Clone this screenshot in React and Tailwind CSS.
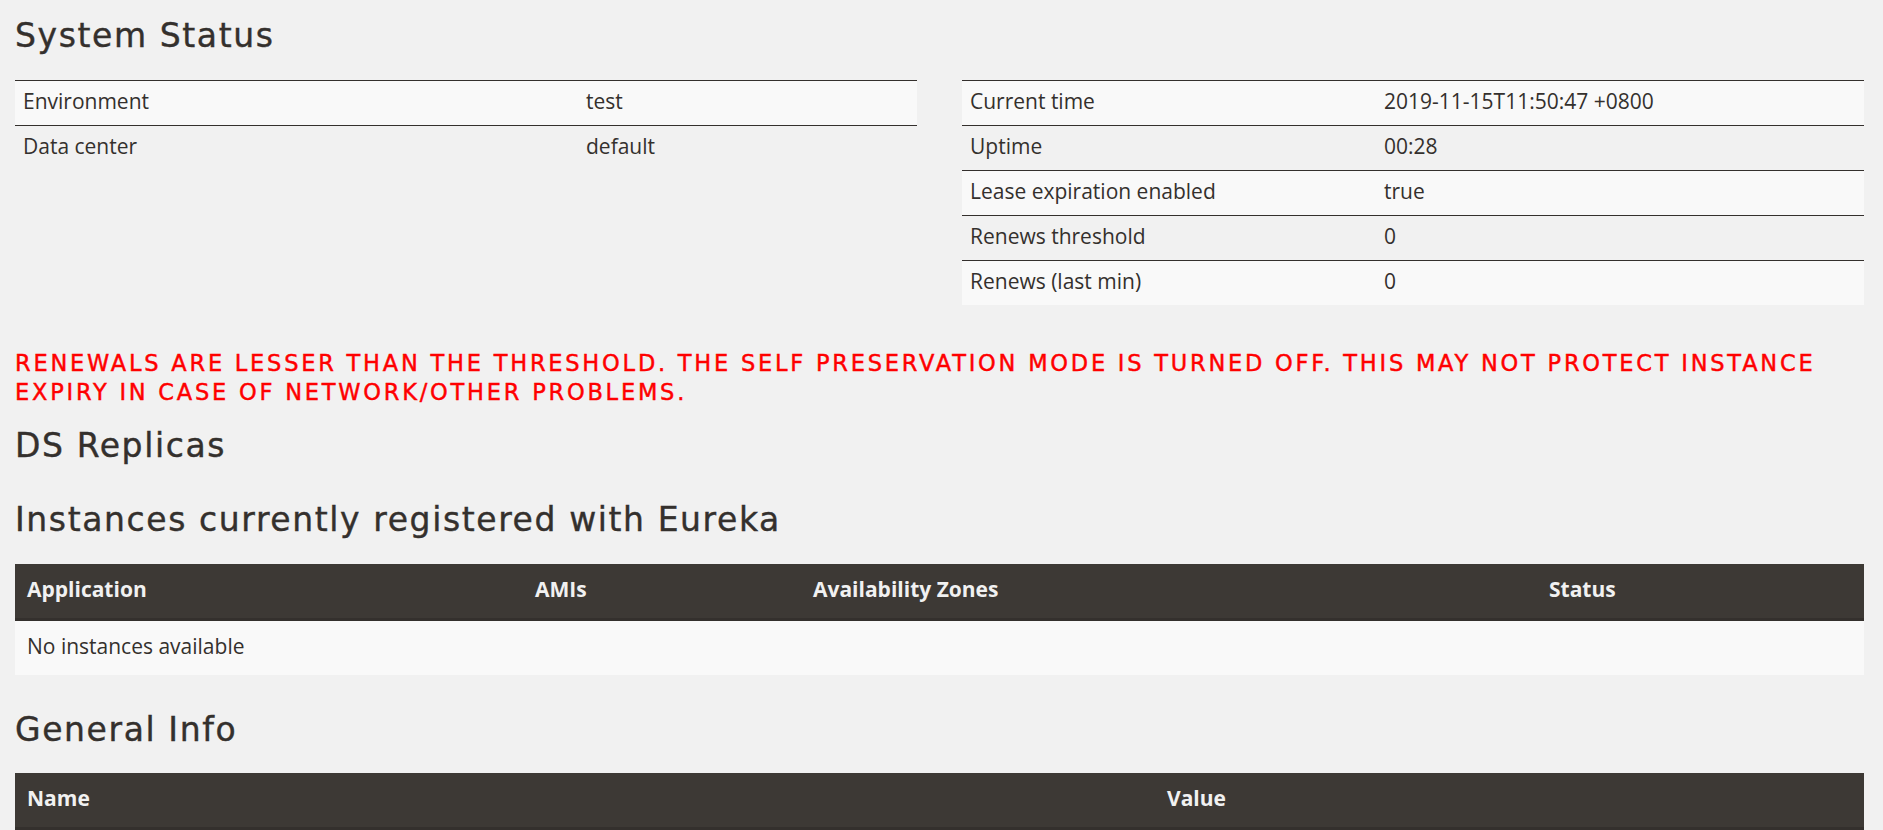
const statusLeft = [
  ["Environment", "test"],
  ["Data center", "default"],
];

const statusRight = [
  ["Current time", "2019-11-15T11:50:47 +0800"],
  ["Uptime", "00:28"],
  ["Lease expiration enabled", "true"],
  ["Renews threshold", "0"],
  ["Renews (last min)", "0"],
];

function Heading({ children, className }) {
  return (
    <h2
      className={`font-['DejaVu_Sans',sans-serif] text-[33px] leading-[40px] tracking-[1.6px] text-[#34302d] [-webkit-text-stroke:0.4px] ${className}`}
    >
      {children}
    </h2>
  );
}

function StatusTable({ rows, labelWidth }) {
  return (
    <table className="w-full table-fixed border-separate border-spacing-0">
      <colgroup>
        <col className={labelWidth} />
        <col />
      </colgroup>
      <tbody>
        {rows.map(([label, value], i) => (
          <tr key={label} className={i % 2 === 0 ? "bg-[#f9f9f9]" : ""}>
            <td className="border-t border-[#34302d] pl-2 pt-[5px] pb-[9px] leading-[30px]">{label}</td>
            <td className="border-t border-[#34302d] pl-2 pt-[5px] pb-[9px] leading-[30px]">{value}</td>
          </tr>
        ))}
      </tbody>
    </table>
  );
}

const th =
  "border-b-[3px] border-[#34302d] bg-[#3d3935] pl-3 pt-[10px] pb-[14px] text-left font-bold leading-[30px] text-[#f1f1f1]";
const td = "bg-[#f9f9f9] pl-3 pt-[10px] pb-[14px] leading-[30px]";

export default function App() {
  return (
    <div className="h-screen overflow-hidden bg-[#f1f1f1] pl-[15px] pr-[19px] font-['Open_Sans',sans-serif] text-[21px] text-[#34302d]">
      <Heading className="pt-[16px]">System Status</Heading>

      <div className="mt-[24px] grid grid-cols-2 items-start gap-x-[45px]">
        <StatusTable rows={statusLeft} labelWidth="w-[563px]" />
        <StatusTable rows={statusRight} labelWidth="w-[414px]" />
      </div>

      <p className="mt-[44px] font-['DejaVu_Sans',sans-serif] text-[22.5px] leading-[29px] tracking-[2.78px] text-[#ff0000] [-webkit-text-stroke:0.45px]">
        RENEWALS ARE LESSER THAN THE THRESHOLD. THE SELF PRESERVATION MODE IS TURNED OFF. THIS MAY NOT PROTECT
        INSTANCE EXPIRY IN CASE OF NETWORK/OTHER PROBLEMS.
      </p>

      <Heading className="mt-[19px]">DS Replicas</Heading>

      <Heading className="mt-[34px]">Instances currently registered with Eureka</Heading>
      <table className="mt-[24px] w-full table-fixed border-separate border-spacing-0">
        <thead>
          <tr>
            <th className={`w-[508px] ${th}`}>Application</th>
            <th className={`w-[278px] ${th}`}>AMIs</th>
            <th className={`w-[736px] ${th}`}>Availability Zones</th>
            <th className={th}>Status</th>
          </tr>
        </thead>
        <tbody>
          <tr>
            <td colSpan={4} className={td}>
              No instances available
            </td>
          </tr>
        </tbody>
      </table>

      <Heading className="mt-[35px]">General Info</Heading>
      <table className="mt-[23px] w-full table-fixed border-separate border-spacing-0">
        <thead>
          <tr>
            <th className={`w-[1140px] ${th}`}>Name</th>
            <th className={th}>Value</th>
          </tr>
        </thead>
      </table>
    </div>
  );
}
